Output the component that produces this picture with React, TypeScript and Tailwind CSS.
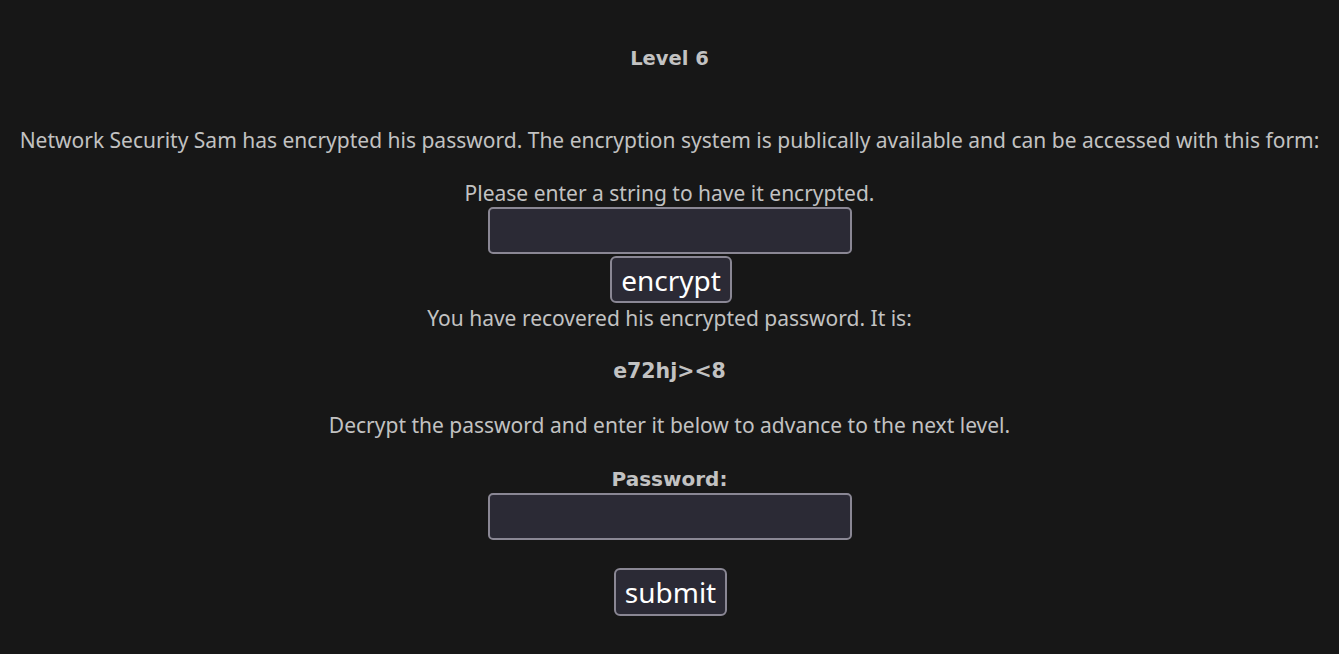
export default function App() {
  return (
    <div className="min-h-[654px] bg-[#171717] text-[#c2c2c2] text-center font-['Noto_Sans',sans-serif] text-[21px]">
      <div className="pt-[45px]">
        <h2 className="font-bold font-['DejaVu_Sans',sans-serif] text-[19.5px] leading-[28px]">Level 6</h2>
        <p className="mt-[53px] leading-[28px]">
          Network Security Sam has encrypted his password. The encryption system is publically available and can be accessed with this form:
        </p>
        <form className="mt-[25px] flex flex-col items-center" onSubmit={(e) => e.preventDefault()}>
          <span className="leading-[28px]">Please enter a string to have it encrypted.</span>
          <input
            type="text"
            className="w-[364px] h-[47px] bg-[#2b2a35] border-2 border-[#8a8794] rounded-[5px] text-white px-2 outline-none"
          />
          <button className="mt-[2px] ml-[3px] h-[47px] px-[9px] bg-[#2b2a35] border-2 border-[#8a8794] rounded-[6px] text-white text-[28px] leading-none">
            encrypt
          </button>
        </form>
        <p className="mt-[1px] leading-[28px]">You have recovered his encrypted password. It is:</p>
        <p className="mt-[25px] font-bold font-['DejaVu_Sans',sans-serif] text-[20.5px] leading-[28px]">e72hj&gt;&lt;8</p>
        <p className="mt-[26px] leading-[28px]">Decrypt the password and enter it below to advance to the next level.</p>
        <form className="mt-[26px] flex flex-col items-center" onSubmit={(e) => e.preventDefault()}>
          <label className="font-bold font-['DejaVu_Sans',sans-serif] text-[20px] leading-[28px]">Password:</label>
          <input
            type="password"
            className="w-[364px] h-[47px] bg-[#2b2a35] border-2 border-[#8a8794] rounded-[5px] text-white px-2 outline-none"
          />
          <button className="mt-[28px] ml-[2px] h-[48px] px-[9px] bg-[#2b2a35] border-2 border-[#8a8794] rounded-[6px] text-white text-[28px] leading-none">
            submit
          </button>
        </form>
      </div>
    </div>
  );
}
